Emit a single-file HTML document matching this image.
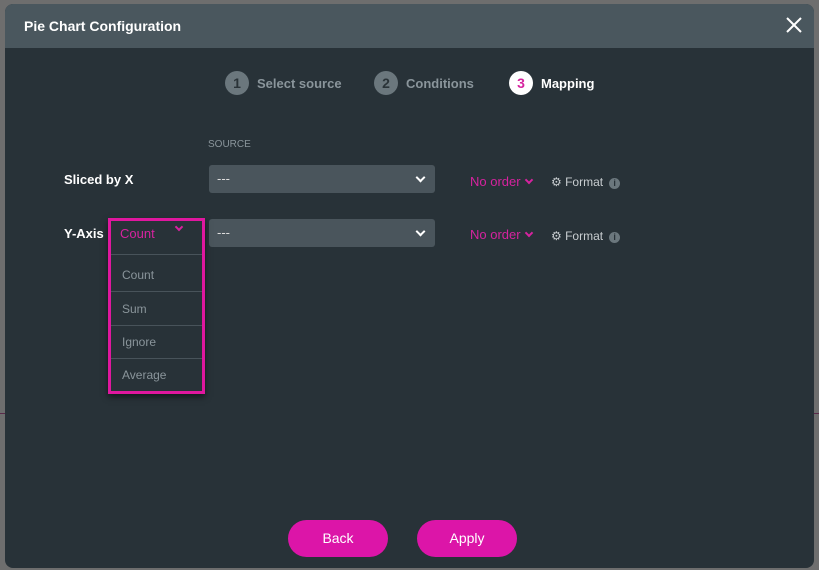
<!DOCTYPE html>
<html><head><style>
*{margin:0;padding:0;box-sizing:border-box}
body{width:819px;height:570px;background:#6e6e6e;font-family:"Liberation Sans",sans-serif;position:relative;overflow:hidden}
.modal{position:absolute;left:5px;top:4px;width:809px;height:564px;background:#283238;border-radius:8px;overflow:hidden}
.hdr{height:44px;background:#4a575e;color:#fff;font-weight:bold;font-size:14px;padding:14px 0 0 19px}
.abs{position:absolute}
.step{position:absolute;top:67px;font-size:13px;font-weight:bold;color:#8a959b;display:flex;align-items:center}
.circ{width:24px;height:24px;border-radius:50%;background:#6b777d;color:#2a3338;text-align:center;line-height:24px;margin-right:8px;font-size:14px}
.lbl{color:#fff;font-weight:bold;font-size:13px}
.sel{position:absolute;left:204px;width:226px;height:28px;background:#4a555c;border-radius:3px;color:#ddd;font-size:13px;padding:6px 0 0 8px}
.chev{position:absolute;right:11px;top:9px;width:7px;height:7px;border-right:2px solid #fff;border-bottom:2px solid #fff;transform:rotate(45deg)}
.pk{color:#d6239f;font-size:13px}
.pchev{display:inline-block;width:6px;height:6px;border-right:2px solid #d6239f;border-bottom:2px solid #d6239f;transform:rotate(45deg);margin:0 0 3px 5px}
.fmt{color:#c8cdd0;font-size:12px}
.info{display:inline-block;width:11px;height:11px;border-radius:50%;background:#6b777d;color:#283238;font-size:9px;text-align:center;line-height:11px;font-weight:bold;margin-left:6px}
.dd{position:absolute;left:103px;top:214px;width:97px;height:176px;border:3px solid #e0179f;box-shadow:0 3px 6px rgba(0,0,0,.5);background:#283238}
.it{position:absolute;left:0;width:91px;border-top:1px solid #48535a;color:#8a959b;font-size:12px;padding-left:11px}
.btn{position:absolute;top:516px;width:100px;height:37px;border-radius:19px;background:#dc15a8;color:#fff;font-size:14px;text-align:center;line-height:37px}
</style></head><body>
<div class="abs" style="left:0;top:413px;width:819px;height:1px;background:#5a2a4a"></div>
<div class="modal">
<div class="hdr">Pie Chart Configuration</div>
<svg class="abs" style="right:12px;top:13px" width="16" height="16" viewBox="0 0 16 16"><path d="M1 1L15 15M15 1L1 15" stroke="#fff" stroke-width="2"/></svg>
<div class="step" style="left:220px"><span class="circ">1</span>Select source</div>
<div class="step" style="left:369px"><span class="circ">2</span>Conditions</div>
<div class="step" style="left:504px;color:#fff"><span class="circ" style="background:#fff;color:#d6239f">3</span>Mapping</div>
<div class="abs" style="left:203px;top:135px;font-size:10px;color:#8a959b">SOURCE</div>
<div class="abs lbl" style="left:59px;top:168px">Sliced by X</div>
<div class="sel" style="top:161px">---<span class="chev"></span></div>
<div class="abs pk" style="left:465px;top:170px">No order<span class="pchev"></span></div>
<div class="abs fmt" style="left:546px;top:171px">⚙ Format<span class="info">i</span></div>
<div class="abs lbl" style="left:59px;top:222px">Y-Axis</div>
<div class="sel" style="top:215px">---<span class="chev"></span></div>
<div class="abs pk" style="left:465px;top:223px">No order<span class="pchev"></span></div>
<div class="abs fmt" style="left:546px;top:225px">⚙ Format<span class="info">i</span></div>
<div class="dd">
<div class="abs pk" style="left:9px;top:5px">Count</div>
<div class="abs" style="left:65px;top:3px;width:6px;height:6px;border-right:2px solid #d6239f;border-bottom:2px solid #d6239f;transform:rotate(45deg)"></div>
<div class="it" style="top:33px;height:36px;padding-top:13px">Count</div>
<div class="it" style="top:70px;height:33px;padding-top:10px">Sum</div>
<div class="it" style="top:104px;height:33px;padding-top:9px">Ignore</div>
<div class="it" style="top:137px;height:33px;padding-top:9px">Average</div>
</div>
<div class="btn" style="left:283px">Back</div>
<div class="btn" style="left:412px">Apply</div>
</div>
</body></html>
